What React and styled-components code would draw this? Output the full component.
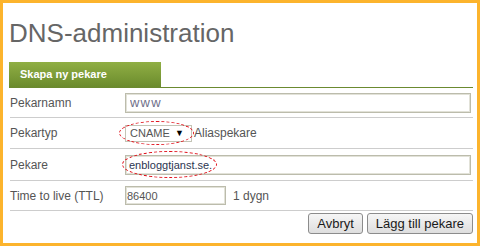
import React from "react";
import styled, { createGlobalStyle } from "styled-components";

const GlobalStyle = createGlobalStyle`
  body {
    margin: 0;
    background: #fff;
  }
`;

const Frame = styled.div`
  width: 480px;
  height: 246px;
  box-sizing: border-box;
  border: 3px solid #fcb42d;
  padding: 0 4px 0 6px;
  background: #fff;
  font-family: "Liberation Sans", Arial, sans-serif;
  color: #555;
`;

const Title = styled.h1`
  margin: 15px 0 14px 0;
  font-size: 26px;
  line-height: 30px;
  font-weight: normal;
  color: #666;
`;

const TabBar = styled.div`
  display: flex;
  height: 25px;
  border-bottom: 1px solid #6b8a30;
`;

const Tab = styled.div`
  width: 152px;
  box-sizing: border-box;
  padding-left: 11px;
  background: linear-gradient(#90af44, #6b8b2d);
  color: #fff;
  font-size: 11px;
  font-weight: bold;
  line-height: 25px;
`;

const Row = styled.div`
  display: grid;
  grid-template-columns: 115px 1fr;
  align-items: center;
  height: ${props => props.h}px;
  margin-left: 1px;
  border-bottom: 1px solid #cdcdcd;
`;

const Label = styled.div`
  font-size: 12px;
  color: #555;
`;

const Field = styled.div`
  position: relative;
  display: flex;
  align-items: center;
  gap: ${props => props.gap || 2}px;
  font-size: 12px;
  color: #555;
`;

const TextInput = styled.input`
  box-sizing: border-box;
  width: ${props => props.w}px;
  height: ${props => props.h || 20}px;
  margin: 0;
  padding: 0 0 0 ${props => (props.pad === undefined ? 3 : props.pad)}px;
  border: 1px solid #bcbcac;
  box-shadow: inset 0 0 0 1px #e2e2d8;
  background: #fff;
  font-family: "Liberation Sans", Arial, sans-serif;
  font-size: ${props => props.size || 11}px;
  letter-spacing: ${props => props.track || 0}px;
  color: ${props => props.ink || "#666"};
  outline: none;
`;

const SelectBox = styled.div`
  box-sizing: border-box;
  display: flex;
  align-items: center;
  justify-content: space-between;
  width: 67px;
  height: 17px;
  padding: 0 7px 0 4px;
  border: 1px solid #c4c4b6;
  font-size: 11px;
  color: #555;
`;

const Arrow = styled.span`
  font-size: 9px;
  color: #000;
`;

const Ellipse = styled.span`
  position: absolute;
  left: ${props => props.x}px;
  top: 50%;
  width: ${props => props.w}px;
  height: ${props => props.h}px;
  margin-top: ${props => props.dy}px;
  box-sizing: border-box;
  border: 1px dashed #e0101a;
  border-radius: 50%;
  pointer-events: none;
`;

const Actions = styled.div`
  display: flex;
  justify-content: flex-end;
  gap: 4px;
  padding-top: 2px;
`;

const Button = styled.button`
  height: 21px;
  margin: 0;
  padding: 0 ${props => props.pad || 8}px;
  border: 1px solid #8c8c8c;
  border-radius: 3px;
  background: linear-gradient(#f6f6f6, #dedede);
  font-family: "Liberation Sans", Arial, sans-serif;
  font-size: 13px;
  color: #1a1a1a;
  line-height: 19px;
`;

export default function App() {
  return (
    <Frame>
      <GlobalStyle />
      <Title>DNS-administration</Title>
      <TabBar>
        <Tab>Skapa ny pekare</Tab>
      </TabBar>
      <Row h={29}>
        <Label>Pekarnamn</Label>
        <Field>
          <TextInput w={346} size={13} track={1.2} pad={4} readOnly value="www" ink="#70708a" />
        </Field>
      </Row>
      <Row h={30}>
        <Label>Pekartyp</Label>
        <Field>
          <SelectBox>
            <span>CNAME</span>
            <Arrow>▼</Arrow>
          </SelectBox>
          <span>Aliaspekare</span>
          <Ellipse x={-6} w={75} h={24} dy={-12} />
        </Field>
      </Row>
      <Row h={31}>
        <Label>Pekare</Label>
        <Field>
          <TextInput w={346} readOnly value="enbloggtjanst.se." ink="#2b3550" />
          <Ellipse x={-3} w={95} h={27} dy={-14} />
        </Field>
      </Row>
      <Row h={29}>
        <Label>Time to live (TTL)</Label>
        <Field gap={7}>
          <TextInput w={101} h={19} pad={1} readOnly value="86400" ink="#555" />
          <span>1 dygn</span>
        </Field>
      </Row>
      <Actions>
        <Button>Avbryt</Button>
        <Button>Lägg till pekare</Button>
      </Actions>
    </Frame>
  );
}
